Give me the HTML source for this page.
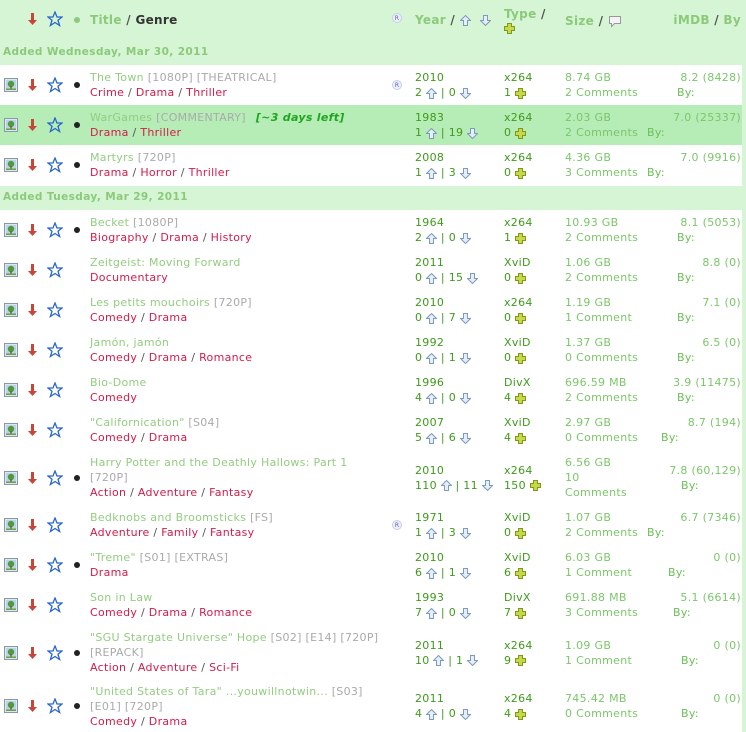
<!DOCTYPE html>
<html><head><meta charset="utf-8"><style>
*{margin:0;padding:0;box-sizing:border-box}
body{width:746px;height:732px;overflow:hidden;background:#fff;font-family:"DejaVu Sans","Liberation Sans",sans-serif;font-size:11px;letter-spacing:0.3px;position:relative}
.bar{position:absolute;left:0;width:742px;background:#d5f5d5}
.edge{position:absolute;left:742px;top:0;width:4px;height:732px;background:#d5f5d5}
.sec{position:absolute;left:3px;font-weight:bold;color:#8cc97a;font-size:10.5px;letter-spacing:0.4px}
.row{position:absolute;left:0;width:742px}
.c{position:absolute;top:0;bottom:0;display:flex;flex-direction:column;justify-content:center;line-height:15px;white-space:nowrap}
.ic{position:absolute;top:0;bottom:0;display:flex;align-items:center}
.t{color:#93cc80}.tag{color:#aaa}.g{color:#d21c48}.sl{color:#555}
.y{color:#3f9a1c}.s{color:#7cc66a}
.by{color:#6bbf55}
.hl{background:#b6ecb6}
svg{display:inline-block;vertical-align:middle}
.left3{color:#1fa51f;font-weight:bold;font-style:italic;margin-left:10px}
.h{position:absolute;font-weight:bold;font-size:12px;color:#8cc97a;letter-spacing:0.3px}
</style></head><body>
<div class="bar" style="top:0;height:65px"></div>
<div class="bar" style="top:186px;height:24px"></div>
<div class="edge"></div>

<!-- header -->
<div class="ic" style="left:28px;top:12px;height:14px;bottom:auto"><svg width="9" height="12" viewBox="0 0 9 12"><path d="M3 0h3v7h3L4.5 12 0 7h3z" fill="#c8453a"/></svg></div>
<div class="ic" style="left:47px;top:11px;height:16px;bottom:auto"><svg width="16" height="16" viewBox="0 0 16 16"><path d="M8 1l2 5h5l-4 3.2 1.6 5.3L8 11.5 3.4 14.5 5 9.2 1 6h5z" fill="none" stroke="#2a66cc" stroke-width="1.3"/></svg></div>
<div style="position:absolute;left:74px;top:17px;width:6px;height:6px;border-radius:3px;background:#8cc97a"></div>
<div class="h" style="left:90px;top:13px">Title <span style="color:#555">/</span> <span style="color:#333">Genre</span></div>
<div style="position:absolute;left:392px;top:13px;width:10px;height:10px;border-radius:5px;background:#eef;border:1px solid #c8d0ea;font-size:6px;color:#56a;text-align:center;line-height:9px">R</div>
<div class="h" style="left:415px;top:13px">Year <span style="color:#555">/</span> <svg width="11" height="11" viewBox="0 0 11 11"><path d="M5.5 .5L10.5 5.5H7.5V10.5H3.5V5.5H.5z" fill="#e8eef6" stroke="#7b9bbf"/></svg> &nbsp;<svg width="11" height="11" viewBox="0 0 11 11"><path d="M5.5 10.5L10.5 5.5H7.5V.5H3.5V5.5H.5z" fill="#e8eef6" stroke="#7b9bbf"/></svg></div>
<div class="h" style="left:504px;top:7px;line-height:14px">Type <span style="color:#555">/</span><br><svg width="11" height="11" viewBox="0 0 11 11"><path d="M3.5 .5h4v3h3v4h-3v3h-4v-3h-3v-4h3z" fill="#c8d84a" stroke="#7a9a1a"/></svg></div>
<div class="h" style="left:565px;top:14px">Size <span style="color:#555">/</span> <svg width="14" height="13" viewBox="0 0 14 13"><path d="M1.5 1.5h11v7h-6l-3 3v-3h-2z" fill="#f4f4f4" stroke="#999"/></svg></div>
<div class="h" style="right:5px;top:13px">iMDB <span style="color:#555">/</span> By</div>
<div class="sec" style="top:46px">Added Wednesday, Mar 30, 2011</div>
<div class="sec" style="top:191px">Added Tuesday, Mar 29, 2011</div>

<div id="rows"></div>
<script>
var IMG='<svg width="14" height="14" viewBox="0 0 14 14"><rect x=".5" y=".5" width="13" height="13" fill="#dfe7ef" stroke="#8a99aa"/><rect x="2" y="2" width="10" height="10" fill="#b9d4ea"/><circle cx="7" cy="6" r="3.2" fill="#4f9a3a"/><rect x="6.3" y="8" width="1.4" height="3" fill="#7a5a2a"/><rect x="2" y="10.5" width="10" height="1.5" fill="#6aa04a"/></svg>';
var AR='<svg width="9" height="12" viewBox="0 0 9 12"><path d="M3 0h3v7h3L4.5 12 0 7h3z" fill="#c8453a"/></svg>';
var ST='<svg width="16" height="16" viewBox="0 0 16 16"><path d="M8 1l2 5h5l-4 3.2 1.6 5.3L8 11.5 3.4 14.5 5 9.2 1 6h5z" fill="none" stroke="#2a66cc" stroke-width="1.3"/></svg>';
var UP='<svg width="11" height="11" viewBox="0 0 11 11"><path d="M5.5 .5L10.5 5.5H7.5V10.5H3.5V5.5H.5z" fill="#e8eef6" stroke="#7b9bbf"/></svg>';
var DN='<svg width="11" height="11" viewBox="0 0 11 11"><path d="M5.5 10.5L10.5 5.5H7.5V.5H3.5V5.5H.5z" fill="#e8eef6" stroke="#7b9bbf"/></svg>';
var PL='<svg width="11" height="11" viewBox="0 0 11 11"><path d="M3.5 .5h4v3h3v4h-3v3h-4v-3h-3v-4h3z" fill="#c8d84a" stroke="#7a9a1a"/></svg>';
var R='<div style="width:10px;height:10px;border-radius:5px;background:#eef;border:1px solid #c8d0ea;font-size:6px;color:#56a;text-align:center;line-height:9px;letter-spacing:0">R</div>';
function gen(a){return a.map(function(x){return '<span class="g">'+x+'</span>'}).join(' <span class="sl">/</span> ')}
var rows=[
[65,40,'<span class="t">The Town</span> <span class="tag">[1080P] [THEATRICAL]</span>',['Crime','Drama','Thriller'],1,1,'2010',2,0,'x264',1,'8.74 GB','2 Comments','8.2 (8428)',677,0],
[105,40,'<span class="t">WarGames</span> <span class="tag">[COMMENTARY]</span><span class="left3">[~3 days left]</span>',['Drama','Thriller'],1,0,'1983',1,19,'x264',0,'2.03 GB','2 Comments','7.0 (25337)',647,1],
[145,40,'<span class="t">Martyrs</span> <span class="tag">[720P]</span>',['Drama','Horror','Thriller'],1,0,'2008',1,3,'x264',0,'4.36 GB','3 Comments','7.0 (9916)',647,0],
[210,40,'<span class="t">Becket</span> <span class="tag">[1080P]</span>',['Biography','Drama','History'],1,0,'1964',2,0,'x264',1,'10.93 GB','2 Comments','8.1 (5053)',677,0],
[250,40,'<span class="t">Zeitgeist: Moving Forward</span>',['Documentary'],0,0,'2011',0,15,'XviD',0,'1.06 GB','2 Comments','8.8 (0)',677,0],
[290,40,'<span class="t">Les petits mouchoirs</span> <span class="tag">[720P]</span>',['Comedy','Drama'],0,0,'2010',0,7,'x264',0,'1.19 GB','1 Comment','7.1 (0)',677,0],
[330,40,'<span class="t">Jamón, jamón</span>',['Comedy','Drama','Romance'],0,0,'1992',0,1,'XviD',0,'1.37 GB','0 Comments','6.5 (0)',677,0],
[370,40,'<span class="t">Bio-Dome</span>',['Comedy'],0,0,'1996',4,0,'DivX',4,'696.59 MB','2 Comments','3.9 (11475)',677,0],
[410,40,'<span class="t">"Californication"</span> <span class="tag">[S04]</span>',['Comedy','Drama'],0,0,'2007',5,6,'XviD',4,'2.97 GB','0 Comments','8.7 (194)',661,0],
[450,55,'<span class="t">Harry Potter and the Deathly Hallows: Part 1</span><br><span class="tag">[720P]</span>',['Action','Adventure','Fantasy'],1,0,'2010',110,11,'x264',150,'6.56 GB','10<br>Comments','7.8 (60,129)',681,0],
[505,40,'<span class="t">Bedknobs and Broomsticks</span> <span class="tag">[FS]</span>',['Adventure','Family','Fantasy'],0,1,'1971',1,3,'XviD',0,'1.07 GB','2 Comments','6.7 (7346)',647,0],
[545,40,'<span class="t">"Treme"</span> <span class="tag">[S01] [EXTRAS]</span>',['Drama'],1,0,'2010',6,1,'XviD',6,'6.03 GB','1 Comment','0 (0)',668,0],
[585,40,'<span class="t">Son in Law</span>',['Comedy','Drama','Romance'],0,0,'1993',7,0,'DivX',7,'691.88 MB','3 Comments','5.1 (6614)',673,0],
[625,55,'<span class="t">"SGU Stargate Universe" Hope</span> <span class="tag">[S02] [E14] [720P]<br>[REPACK]</span>',['Action','Adventure','Sci-Fi'],1,0,'2011',10,1,'x264',9,'1.09 GB','1 Comment','0 (0)',681,0],
[680,52,'<span class="t">"United States of Tara" ...youwillnotwin...</span> <span class="tag">[S03]<br>[E01] [720P]</span>',['Comedy','Drama'],1,0,'2011',4,0,'x264',4,'745.42 MB','0 Comments','0 (0)',681,0]
];
var h='';
rows.forEach(function(r){
h+='<div class="row'+(r[15]?' hl':'')+'" style="top:'+r[0]+'px;height:'+r[1]+'px">'+
'<div class="ic" style="left:4px">'+IMG+'</div><div class="ic" style="left:28px">'+AR+'</div><div class="ic" style="left:47px">'+ST+'</div>'+
(r[4]?'<div class="ic" style="left:74px"><div style="width:6px;height:6px;border-radius:3px;background:#222"></div></div>':'')+
'<div class="c" style="left:90px">'+'<div>'+r[2]+'</div><div>'+gen(r[3])+'</div></div>'+
(r[5]?'<div class="ic" style="left:392px">'+R+'</div>':'')+
'<div class="c y" style="left:415px"><div>'+r[6]+'</div><div>'+r[7]+' '+UP+' | '+r[8]+' '+DN+'</div></div>'+
'<div class="c y" style="left:504px"><div>'+r[9]+'</div><div>'+r[10]+' '+PL+'</div></div>'+
'<div class="c s" style="left:565px"><div>'+r[11]+'</div><div>'+r[12]+'</div></div>'+
'<div class="c s" style="right:1px;text-align:right"><div>'+r[13]+'</div><div>&nbsp;</div></div>'+
'<div class="c by" style="left:'+r[14]+'px"><div>&nbsp;</div><div>By:</div></div>'+
'</div>';
});
document.getElementById('rows').innerHTML=h;
</script>
</body></html>
